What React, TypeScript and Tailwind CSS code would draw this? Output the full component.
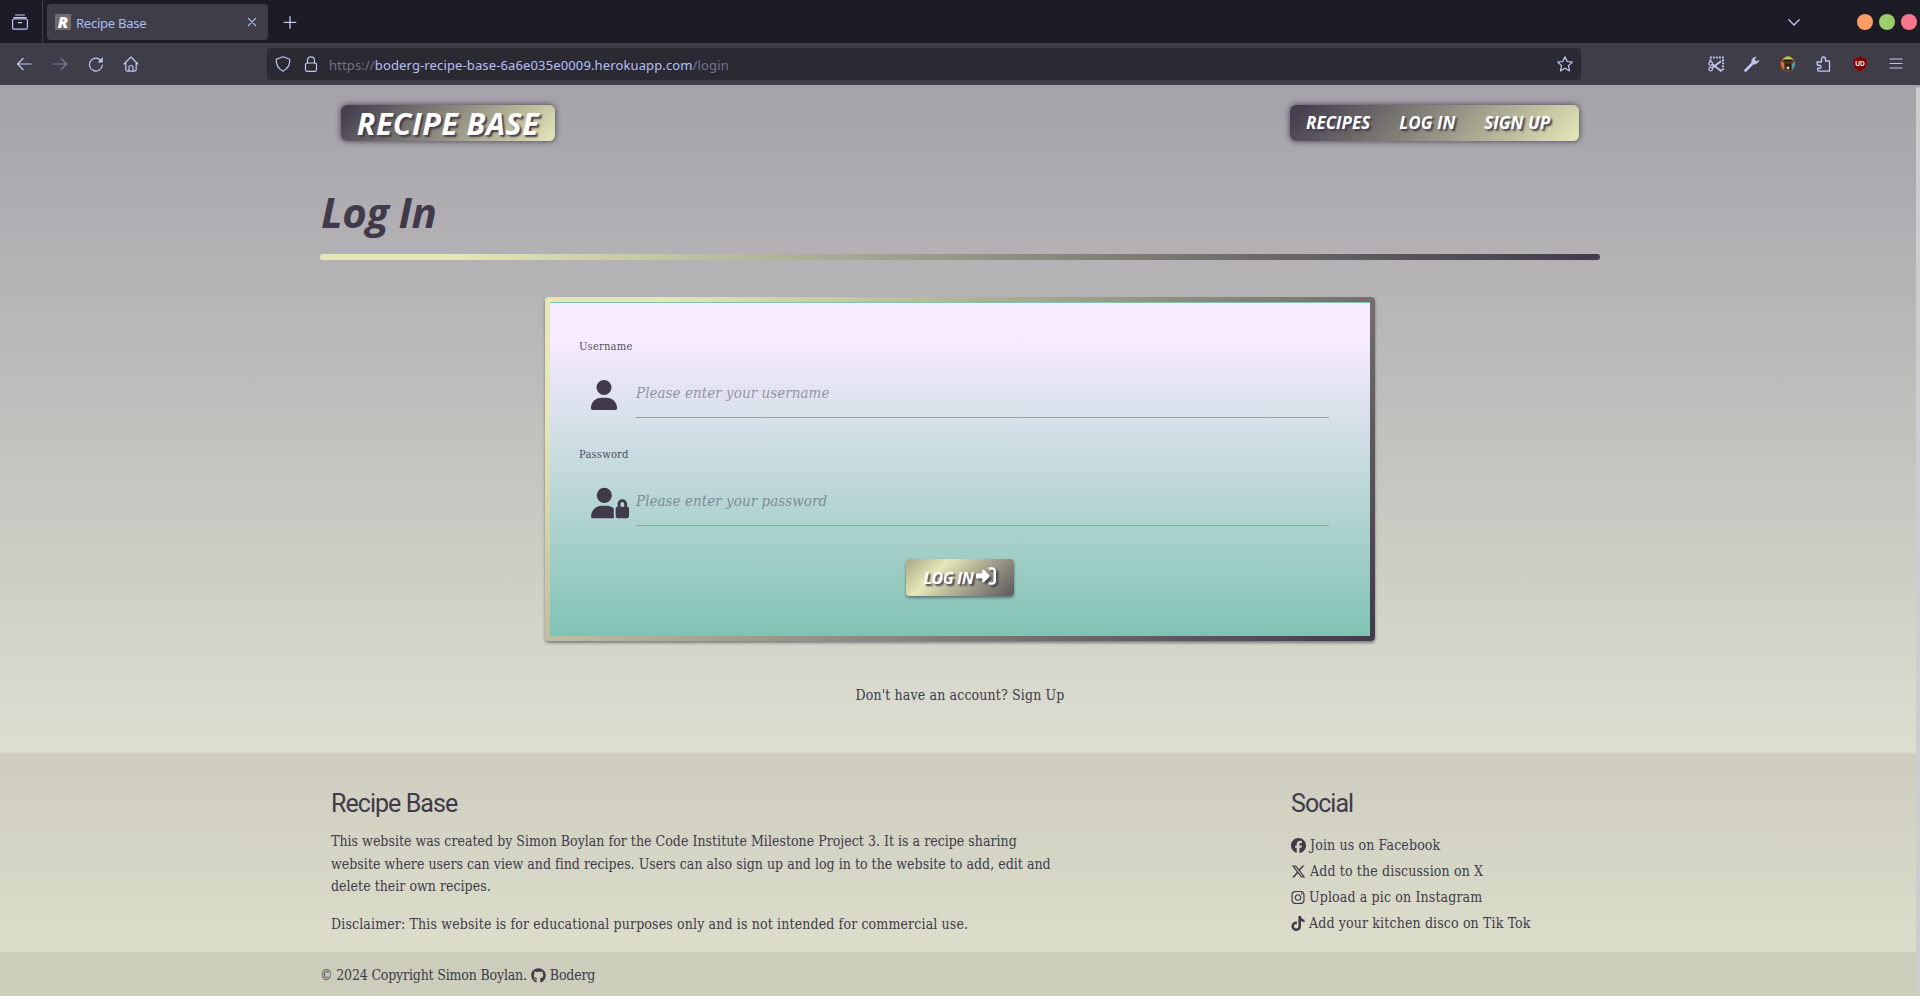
import React from "react";
import { FaUser, FaUserLock, FaFacebook, FaXTwitter, FaInstagram, FaTiktok, FaGithub, FaRightToBracket } from "react-icons/fa6";

const slab = "font-['DejaVu_Serif_Condensed','DejaVu_Serif',serif] [font-stretch:condensed]";
const head = "font-['Open_Sans',sans-serif]";
const shadow = "[text-shadow:2px_2px_2px_#403a4a]";
const footerHead = "pt-px font-['Roboto',sans-serif] text-[25px] leading-10 tracking-[-0.95px] [font-stretch:100%]";

function Glyph({ children, className = "", size = 16 }: { children: React.ReactNode; className?: string; size?: number }) {
  return (
    <svg width={size} height={size} viewBox="0 0 16 16" fill="none" stroke="currentColor" strokeWidth="1.2" strokeLinecap="round" strokeLinejoin="round" className={`shrink-0 ${className}`}>
      {children}
    </svg>
  );
}

function TabStrip() {
  return (
    <div className="flex h-[43px] bg-[#1c1b26] text-[#c0c8f5]">
      <div className="flex w-[43px] items-center border-r border-[#3f3e4b] pl-3">
        <Glyph><path d="M3.5 1h9M1.8 3.6h12.4M2.2 5h11.6q1.6 0 1.6 1.6v6.8q0 1.8-1.8 1.8H2.4q-1.8 0-1.8-1.8V6.6Q.6 5 2.2 5zM6.3 8.6h3.4" /></Glyph>
      </div>
      <div className="mt-1 ml-1 flex h-9 w-[221px] items-center rounded bg-[#3f3e48] pl-2 text-[#aebdf0]">
        <div className="flex h-4 w-4 items-center justify-center bg-[#706c6b] font-['Open_Sans',sans-serif] text-[16px] leading-none font-extrabold text-white italic">R</div>
        <span className="ml-[5px] pt-[3px] font-['Noto_Sans',sans-serif] text-[13px] tracking-[-0.25px]">Recipe Base</span>
        <Glyph size={10} className="ml-auto mr-[11px]"><path d="M2 2l12 12M14 2L2 14" strokeWidth="1.7" /></Glyph>
      </div>
      <Glyph size={14} className="mt-[15px] ml-[15px]"><path d="M8 2v13M1.5 8.5h13" strokeWidth="1.5" /></Glyph>
      <div className="ml-auto flex items-center">
        <Glyph size={14} className="mr-[56px]"><path d="M2 5.5l6 6 6-6" strokeWidth="1.5" /></Glyph>
        <div className="mr-[3px] flex gap-1.5">
          <span className="h-4 w-4 rounded-full bg-[#ff9e64]" />
          <span className="h-4 w-4 rounded-full bg-[#9ece6a]" />
          <span className="h-4 w-4 rounded-full bg-[#f7768e]" />
        </div>
      </div>
    </div>
  );
}

function Toolbar() {
  return (
    <div className="flex h-[42px] items-center bg-[#3f3e48] pl-4 text-[#c0c8f5]">
      <div className="flex w-[251px] items-center gap-5">
        <Glyph><path d="M15 8H1.5M7 2.5L1.5 8 7 13.5" /></Glyph>
        <Glyph className="opacity-45"><path d="M1 8h13.5M9 2.5L14.5 8 9 13.5" /></Glyph>
        <Glyph><path d="M13.2 5A6.4 6.4 0 1 0 14.3 9" /><path d="M14.8 1v5.5H9.5z" fill="currentColor" stroke="none" /></Glyph>
        <Glyph className="-ml-px"><path d="M1 8l7-7 7 7M2.8 6.5v7q0 1.7 1.7 1.7h7q1.7 0 1.7-1.7v-7M6 15v-3.5q0-2 2-2t2 2V15" /></Glyph>
      </div>
      <div className="flex h-8 w-[1314px] items-center rounded bg-[#2b2a33] pl-2">
        <Glyph><path d="M8 .7l6.7 2.5q.6 8-6.7 12Q.7 11.2 1.3 3.2z" /></Glyph>
        <Glyph className="ml-3"><rect x="2.5" y="7" width="11" height="8.3" rx="1.5" /><path d="M4.5 7V4.5q0-3.7 3.5-3.7t3.5 3.7V7" /></Glyph>
        <span className="ml-[10px] pt-[3px] font-['Noto_Sans',sans-serif] text-[13px] tracking-[0.13px] text-[#71738b]">https://<span className="text-[#b4c0f2]">boderg-recipe-base-6a6e035e0009.herokuapp.com</span>/login</span>
        <Glyph className="ml-auto mr-2"><path d="M8 .8l2.2 4.7 5.1.6-3.800 3.500 1 5.300L8 12.300l-4.500 2.600 1-5.300L.7 6.100l5.100-.6z" /></Glyph>
      </div>
      <div className="ml-[127px] flex items-center gap-5">
        <Glyph><path d="M2.500 5V1.500H15v13h-3" strokeDasharray="1.800 1.200" strokeWidth="2" strokeLinecap="butt" /><path d="M4.500 11.500L12.500 5.500M4.500 8.500l8 6" strokeWidth="1.700" /><circle cx="2.700" cy="7.500" r="1.800" /><circle cx="2.700" cy="13" r="1.800" /></Glyph>
        <Glyph><path d="M1.500 14.500L9 7" strokeWidth="2.600" /><path d="M11.500 1Q7 2 8 7q4 3 7-2.500l-2.800 1-1.700-1.700z" fill="currentColor" strokeWidth="0.800" /></Glyph>
        <Glyph><g stroke="none"><circle cx="8" cy="8" r="8" fill="#6b4030" /><path d="M1 5Q0 10 4 14V7z" fill="#e56c35" /><path d="M15 5Q16 11 12 14V8z" fill="#4b9bb0" /><path d="M2.500 4Q8-3.500 13.500 4z" fill="#b9c74b" /><rect x="3.500" y="3.500" width="9" height="2" rx="1" fill="#211d25" /><path d="M4.500 5.500h7V8l-1 6h-5l-1-6z" fill="#4b3026" /><rect x="6" y="8" width="5" height="6" fill="#251f20" /><circle cx="8" cy="12" r="1.400" fill="#e5d3b1" /></g></Glyph>
        <Glyph><path d="M1 6h4.500V3.500Q5.500 1 7.500 1t2 2.500V5h4v10.200H2.500Q1.500 15 1.500 12.500q4-.2 3.500-2.200-.5-1.300-3.500-1z" strokeWidth="1.300" /></Glyph>
        <svg className="h-4 w-4" viewBox="0 0 16 16"><path d="M1 2.500Q5 2 8 0q3 2 7 2.500V8q-.5 5-7 8Q1.500 13 1 8z" fill="#800000" stroke="#5a4f57" strokeWidth="0.500" /><text x="8" y="9.800" textAnchor="middle" className="fill-white font-['Liberation_Sans',sans-serif] text-[6.5px] font-bold">UD</text></svg>
        <Glyph><path d="M2 3h12M2 7.500h12M2 12h12" /></Glyph>
      </div>
    </div>
  );
}

function Field({ label, placeholder, icon }: { label: string; placeholder: string; icon: React.ReactNode }) {
  return (
    <div className="h-[108px]">
      <label className="-ml-px block h-5 text-[11.2px] leading-[22px] text-[#403a4a]/90">{label}</label>
      <div className="mt-[15px] flex h-12">
        <div className="w-14 pt-px pl-[11px] text-[#403a4a]">{icon}</div>
        <div className="mr-[11px] h-[47px] flex-1 border-b border-[#9e9e9e] pt-2 text-[15px] leading-7 tracking-[0.05px] text-[#403a4a]/50 italic">{placeholder}</div>
      </div>
    </div>
  );
}

const social = [
  { Icon: FaFacebook, text: "Join us on Facebook", cls: "w-[15px]" },
  { Icon: FaXTwitter, text: "Add to the discussion on X", cls: "w-[15px]" },
  { Icon: FaInstagram, text: "Upload a pic on Instagram", cls: "w-[14px]" },
  { Icon: FaTiktok, text: "Add your kitchen disco on Tik Tok", cls: "w-[14px]" },
];

export default function App() {
  return (
    <div className="h-[996px] w-[1920px] overflow-hidden">
      <TabStrip />
      <Toolbar />
      <div className={`relative h-[911px] bg-linear-to-b from-[#a5a2aa] from-0% to-[#dfe0d1] to-75% ${slab} text-[14px] tracking-[0.14px] text-[#403a4a]`}>
        <div className="absolute top-0.5 right-0 h-[905px] w-1 rounded-full bg-[#cdccce]" />
        <div className="h-[668px] pt-5">
          <nav className={`mx-auto flex w-[1238px] justify-between text-white italic [font-stretch:100%] ${head} ${shadow}`}>
            <div className="flex h-9 w-[214px] items-center justify-center rounded-md bg-linear-135 from-[#403a4a] to-[#e6e8b8] pt-px text-[30.5px] font-bold tracking-[0.45px] whitespace-nowrap shadow-[0_0_6px_#403a4a]">RECIPE BASE</div>
            <div className="flex h-9 w-[289px] items-center gap-[29px] rounded-md bg-linear-135 from-[#403a4a] to-[#e6e8b8] pl-4 text-[17px] font-bold tracking-[0.05px] whitespace-nowrap shadow-[0_0_6px_#403a4a]">
              <span>RECIPES</span><span>LOG IN</span><span>SIGN UP</span>
            </div>
          </nav>
          <main className="mx-auto w-[1280px]">
            <h1 className={`mt-11 h-[69px] pl-px text-[42px] leading-[54px] font-bold tracking-[-0.6px] italic [font-stretch:100%] ${head}`}>Log In</h1>
            <div className="h-1.5 rounded-full bg-linear-to-r from-[#e6e8b8] from-10% to-[#403a4a]" />
            <div className="mx-auto mt-[37px] h-[344px] w-[830px] rounded bg-linear-135 from-[#e6e8b8] from-10% to-[#403a4a] p-[5px] shadow-[0_2px_3px_#403a4a90]">
              <form className="h-full border-t border-[#7fc3b3] bg-linear-to-b from-[#f7ebff] from-10% to-[#7fc3b3] px-[30px] pt-[33px]">
                <Field label="Username" placeholder="Please enter your username" icon={<FaUser size={30} className="mt-2 -ml-0.5" />} />
                <Field label="Password" placeholder="Please enter your password" icon={<FaUserLock size={38} className="mt-1" />} />
                <button type="button" className={`mx-auto mt-[7px] flex h-[37px] w-[108px] items-center justify-center gap-[3px] rounded bg-linear-135 from-[#aaa888] via-[#e6e8b8] via-30% to-[#5d575c] text-[16px] font-bold tracking-[-0.4px] whitespace-nowrap text-white italic [font-stretch:100%] shadow-[0_2px_3px_#403a4a90] ${head} ${shadow}`}>
                  LOG IN
                  <FaRightToBracket size={20} className="-mt-1 drop-shadow-[2px_2px_1px_#403a4a]" />
                </button>
              </form>
            </div>
            <p className="mt-[42px] text-center leading-6">Don't have an account? Sign Up</p>
          </main>
        </div>
        <footer>
          <div className="h-[199px] bg-linear-to-b from-[#cecdc0] to-[#dcddca] pt-[30px]">
            <div className="mx-auto flex w-[1258px]">
              <section className="w-[960px]">
                <h2 className={footerHead}>Recipe Base</h2>
                <p className="mt-1.5 leading-[22.5px] tracking-[0.02px] whitespace-nowrap">This website was created by Simon Boylan for the Code Institute Milestone Project 3. It is a recipe sharing<br />website where users can view and find recipes. Users can also sign up and log in to the website to add, edit and<br />delete their own recipes.</p>
                <p className="mt-[15px] leading-[22.5px]">Disclaimer: This website is for educational purposes only and is not intended for commercial use.</p>
              </section>
              <section>
                <h2 className={footerHead}>Social</h2>
                <ul className="mt-2 leading-[26px] whitespace-nowrap">
                  {social.map(({ Icon, text, cls }) => <li key={text} className="flex items-center gap-1"><Icon size={15} className={cls} />{text}</li>)}
                </ul>
              </section>
            </div>
          </div>
          <div className="h-11 bg-[#cccdbb]">
            <div className="mx-auto flex h-[46px] w-[1280px] items-center gap-1 tracking-[-0.18px]">© 2024 Copyright Simon Boylan. <FaGithub size={15} /> Boderg</div>
          </div>
        </footer>
      </div>
    </div>
  );
}
